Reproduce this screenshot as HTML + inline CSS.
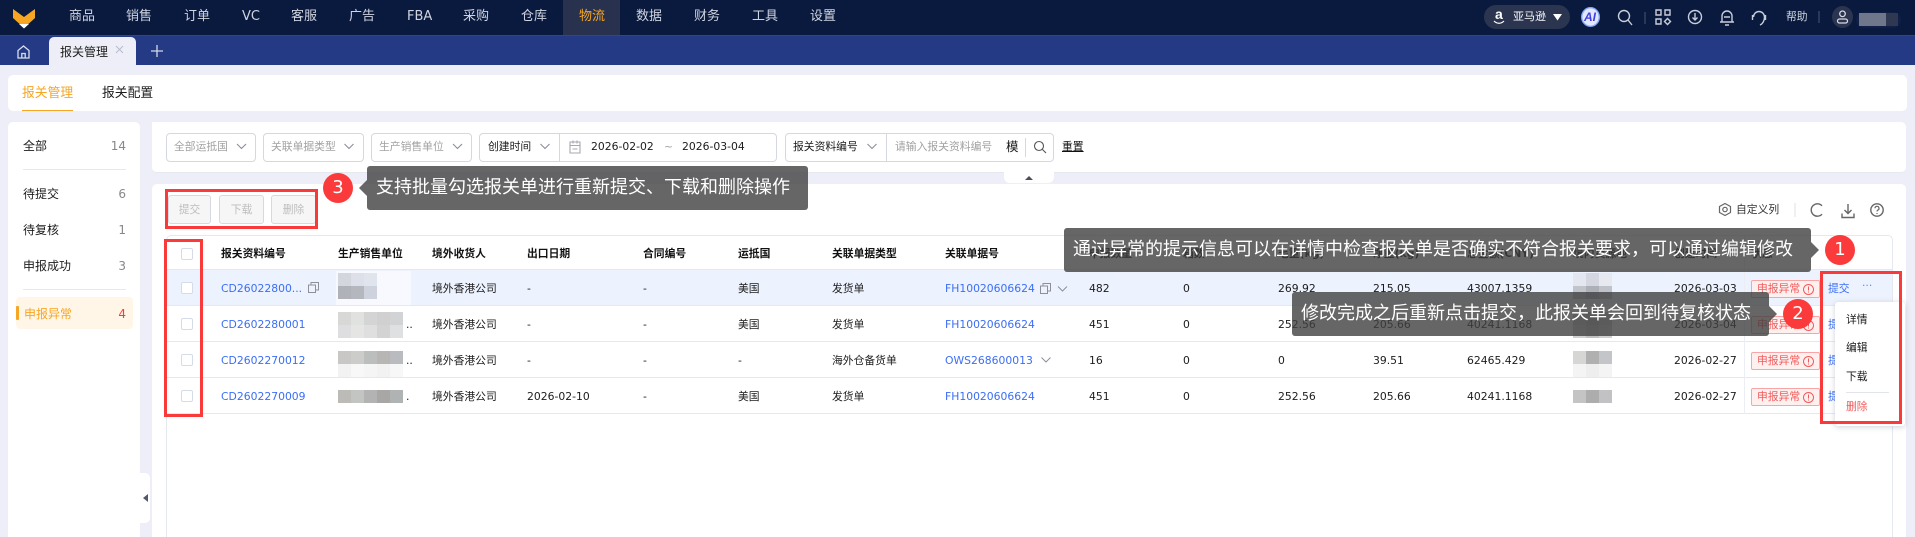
<!DOCTYPE html>
<html lang="zh"><head><meta charset="utf-8"><title>报关管理</title>
<style>
*{box-sizing:border-box}
html,body{margin:0;padding:0;width:1915px;height:537px;overflow:hidden;background:#edeef7}
body{position:relative;font:10.8px/16px "DejaVu Sans","Noto Sans CJK SC",sans-serif;color:#1c1c1c}
div,span,svg{position:absolute}
span{white-space:nowrap}
.n{top:9px;font-size:13px;color:#d0d4e0}
.card{background:#fff;border-radius:5px}
.sel{height:29px;top:133px;border:1px solid #d6d8e1;border-radius:4px;background:#fff}
.f{top:139px;color:#a2a2a2}
.d{top:139px;color:#1c1c1c}
.s{font-size:12px;line-height:16px;color:#1c1c1c}
.c{font-size:12px;line-height:16px;color:#888}
.b{top:195px;height:29px;background:#f6f6f7;border:1px solid #d6d9e1;border-radius:3px;color:#bdbdbd;text-align:center;line-height:28px}
.h{top:246px;color:#111;font-weight:bold;font-size:10.8px}
.r{left:167px;width:1725px;height:36px;border-bottom:1px solid #e6e8f0;line-height:35px}
.r span{top:1px;line-height:35px}
.r .l{color:#3b6ef6}
.cb{left:14px;top:12px;width:12px;height:12px;border:1px solid #d5dbe8;border-radius:2px;background:#fff}
.tag{left:1584px;top:10px;width:69px;height:18px;border:1px solid #f9a5a5;border-radius:2px;background:#fff0f0}
.tag span{left:5px;top:0;line-height:15px;color:#f25a5a}
.tag svg{left:50px;top:2px}
.m{width:13px;height:13px}
.tip{height:44px;background:rgba(64,64,64,.8);border-radius:3px;color:#fff;font-size:18px;line-height:44px}
.tip span{top:0;line-height:44px}
.arr{width:0;height:0;border-top:8px solid transparent;border-bottom:8px solid transparent}
.o{width:30px;height:30px;border-radius:50%;background:#fb3b3b;color:#fff;font-size:18px;line-height:30px;text-align:center}
.red{border:3px solid #f93a3a;background:transparent}
.dd{color:#1c1c1c;left:1846px}
</style></head><body>

<!-- top nav -->
<div style="left:0;top:0;width:1915px;height:35px;background:#0a1a3e"></div>
<div style="left:563px;top:0;width:57px;height:35px;background:#28324f"></div>
<svg style="left:13px;top:8px" width="22" height="21" viewBox="0 0 22 21"><path d="M0 1L11 9L22 1V10L11 20L0 10Z" fill="#f6a623"/><path d="M6 16H16L11 20.5Z" fill="#fff"/></svg>
<span class="n" style="left:69px">商品</span><span class="n" style="left:126px">销售</span><span class="n" style="left:184px">订单</span><span class="n" style="left:242px">VC</span><span class="n" style="left:291px">客服</span><span class="n" style="left:349px">广告</span><span class="n" style="left:407px">FBA</span><span class="n" style="left:463px">采购</span><span class="n" style="left:521px">仓库</span><span class="n" style="left:579px;color:#f6a623">物流</span><span class="n" style="left:636px">数据</span><span class="n" style="left:694px">财务</span><span class="n" style="left:752px">工具</span><span class="n" style="left:810px">设置</span>

<div style="left:1484px;top:5px;width:86px;height:24px;border-radius:12px;background:#2b3550"></div>
<span style="left:1495px;top:5px;color:#fff;font:bold 14px/18px 'Liberation Sans',sans-serif">a</span>
<svg style="left:1493px;top:20px" width="12" height="5" viewBox="0 0 12 5" fill="none" stroke="#fff" stroke-width="1.200"><path d="M1 1c3 3 7 3 10 0"/></svg>
<span style="left:1513px;top:9px;color:#fff;font-size:11px">亚马逊</span>
<svg style="left:1553px;top:14px" width="9" height="7" viewBox="0 0 9 7"><path d="M0 0H9L4.5 6.5Z" fill="#fff"/></svg>
<svg style="left:1581px;top:7px" width="19" height="20" viewBox="0 0 19 20"><ellipse cx="9.5" cy="10" rx="8.8" ry="9.3" fill="#e4e8ff" stroke="#86a8fa" stroke-width="1.400"/></svg>
<span style="left:1584px;top:9px;color:#3f3fe0;font:bold italic 12px/16px 'Liberation Sans',sans-serif">AI</span>
<svg style="left:1615px;top:5px" width="300" height="26" viewBox="0 0 300 26" fill="none" stroke="#c9cdd8" stroke-width="1.4">
<circle cx="9" cy="11" r="5.5"/><path d="M13 15L17 20"/>
<path d="M30 7V19" stroke="#4b5470" stroke-width="1"/>
<path d="M41 5h5v5h-5zM50 5h5v5h-5zM41 14h5v5h-5zM52.500 13.500l3 3-3 3-3-3z"/>
<circle cx="80" cy="12" r="6.500"/><path d="M80 8v7M77.500 12.500L80 15l2.500-2.500"/>
<path d="M107 17v-6a5 5 0 0 1 10 0v6zM105 17h14M110 20h4M109 12h6"/>
<path d="M138.500 12a5.500 5.500 0 0 1 11 0M149.500 12c0 4-2 7-4.500 8M137.500 10v5M150.500 10v5"/>
<path d="M204 6V18" stroke="#4b5470" stroke-width="1"/>
</svg>
<span style="left:1786px;top:9px;color:#d0d4e0;font-size:10.800px">帮助</span>
<div style="left:1832px;top:6px;width:21px;height:22px;border-radius:50%;background:#2b3550"></div>
<svg style="left:1836px;top:10px" width="13" height="14" viewBox="0 0 13 14" fill="none" stroke="#d5d9e4" stroke-width="1.3"><circle cx="6.500" cy="3.800" r="2.800"/><rect x="1.500" y="9" width="10" height="4" rx="2"/></svg>
<div style="left:1856px;top:12px;width:45px;height:16px;border-radius:8px;background:#0f1f48"></div>
<div style="left:1859px;top:13px;width:27px;height:13px;background:#70778a"></div>
<div style="left:1886px;top:13px;width:12px;height:13px;background:#2e3850"></div>

<!-- tab bar -->
<div style="left:0;top:35px;width:1915px;height:30px;background:#243a84;border-top:1px solid #2f4590"></div>
<svg style="left:17px;top:45px" width="13" height="14" viewBox="0 0 13 14" fill="none" stroke="#d9deec" stroke-width="1.300"><path d="M1 13V5.500L6.500 1L12 5.500V13ZM4.800 13V8.500H8.200V13"/></svg>
<div style="left:49px;top:37px;width:87px;height:28px;background:#edeef7;border-radius:5px 5px 0 0"></div>
<span style="left:60px;top:44px;font-size:12px;color:#1c1c1c">报关管理</span>
<svg style="left:115px;top:45px" width="9" height="9" viewBox="0 0 9 9" stroke="#b8bdcb" stroke-width="1"><path d="M1 1L8 8M8 1L1 8"/></svg>
<svg style="left:151px;top:45px" width="12" height="12" viewBox="0 0 12 12" stroke="#d3d8e6" stroke-width="1.300"><path d="M6 0V12M0 6H12"/></svg>

<!-- sub tabs -->
<div class="card" style="left:8px;top:75px;width:1899px;height:36px"></div>
<span style="left:22px;top:86px;font-size:12.800px;color:#f6a623">报关管理</span>
<div style="left:22px;top:110px;width:51px;height:1px;background:#f6a623"></div>
<span style="left:102px;top:86px;font-size:12.800px;color:#1c1c1c">报关配置</span>

<!-- sidebar -->
<div class="card" style="left:8px;top:122px;width:132px;height:430px"></div>
<span class="s" style="left:23px;top:138px">全部</span><span class="c" style="right:1789px;top:138px">14</span>
<div style="left:23px;top:169px;width:103px;height:1px;background:#e6e8ef"></div>
<span class="s" style="left:23px;top:186px">待提交</span><span class="c" style="right:1789px;top:186px">6</span>
<span class="s" style="left:23px;top:222px">待复核</span><span class="c" style="right:1789px;top:222px">1</span>
<span class="s" style="left:23px;top:258px">申报成功</span><span class="c" style="right:1789px;top:258px">3</span>
<div style="left:23px;top:289px;width:103px;height:1px;background:#e6e8ef"></div>
<div style="left:16px;top:297px;width:117px;height:32px;background:#fff6e8;border-radius:4px"></div>
<div style="left:16px;top:306px;width:3px;height:14px;background:#f6a623;border-radius:1px"></div>
<span class="s" style="left:24px;top:306px;color:#f6a623">申报异常</span><span class="c" style="right:1789px;top:306px;color:#fb3b3b">4</span>
<div style="left:140px;top:473px;width:10px;height:50px;background:#fff;border-radius:0 5px 5px 0"></div>
<svg style="left:143px;top:494px" width="5" height="8" viewBox="0 0 5 8"><path d="M5 0V8L0 4Z" fill="#55596a"/></svg>

<!-- filters -->
<div class="card" style="left:152px;top:122px;width:1754px;height:51px;border-bottom:1px solid #e6e8f0;border-radius:0 5px 5px 5px"></div>
<div class="sel" style="left:166px;width:90px"></div><span class="f" style="left:174px">全部运抵国</span>
<div class="sel" style="left:263px;width:101px"></div><span class="f" style="left:271px">关联单据类型</span>
<div class="sel" style="left:371px;width:101px"></div><span class="f" style="left:379px">生产销售单位</span>
<div class="sel" style="left:479px;width:298px"></div><span class="d" style="left:488px">创建时间</span>
<div style="left:559px;top:133px;width:1px;height:29px;background:#d6d8e1"></div>
<span class="d" style="left:591px">2026-02-02</span><span class="f" style="left:664px">~</span><span class="d" style="left:682px">2026-03-04</span>
<div class="sel" style="left:785px;width:269px"></div><span class="d" style="left:793px">报关资料编号</span>
<div style="left:886px;top:133px;width:1px;height:29px;background:#d6d8e1"></div>
<span class="f" style="left:895px">请输入报关资料编号</span><span class="d" style="left:1006px;font-size:12.500px">模</span>
<div style="left:1025px;top:138px;width:1px;height:19px;background:#d6d8e1"></div>
<span style="left:1062px;top:139px;color:#111;text-decoration:underline">重置</span>
<svg style="left:0;top:0;width:1915px;height:180px" viewBox="0 0 1915 180" fill="none" stroke="#8b8f98" stroke-width="1.100">
<path d="M237 144l4.500 4.500 4.500-4.500M344.500 144l4.500 4.500 4.500-4.500M453 144l4.500 4.500 4.500-4.500M540.500 144l4.500 4.500 4.500-4.500M867.500 144l4.500 4.500 4.500-4.500"/>
<path d="M570 142h10v11h-10zM570 145.500h10M573 140.500v3M577 140.500v3M572.500 149h5" stroke="#a5a8b0"/>
<circle cx="1039" cy="146" r="4.500" stroke="#555"/><path d="M1042.500 149.500l3.500 3.500" stroke="#555"/>
</svg>

<!-- table card -->
<div class="card" style="left:152px;top:184px;width:1754px;height:360px"></div>
<div style="left:1004px;top:172px;width:50px;height:11px;background:#fff;border-radius:0 0 6px 6px"></div>
<svg style="left:1025px;top:176px" width="8" height="4" viewBox="0 0 8 4"><path d="M0 4H8L4 0Z" fill="#4a4e5a"/></svg>

<div class="b" style="left:168px;width:43px">提交</div>
<div class="b" style="left:219px;width:45px">下载</div>
<div class="b" style="left:271px;width:45px">删除</div>

<svg style="left:1718px;top:202px" width="170" height="18" viewBox="0 0 170 18" fill="none" stroke="#666" stroke-width="1.200">
<path d="M7 1.500l5.500 3v6l-5.500 3-5.500-3v-6z" stroke-linejoin="round"/><circle cx="7" cy="7.500" r="2.200"/>
<path d="M77 1V15" stroke="#e4e6ec"/>
<path d="M104 3.800a6.200 6.200 0 1 0 0 8.400" stroke-width="1.400"/>
<path d="M130 2v9M126.500 8l3.500 3.500L133.500 8M124 11.500v4h12v-4" stroke-width="1.400"/>
<circle cx="159" cy="8" r="6.200" stroke-width="1.400"/><path d="M157 6.300a2 2 0 1 1 2.700 1.900c-.6.300-.7.700-.7 1.300M159 11v1" stroke-width="1.200"/>
</svg>
<span style="left:1736px;top:202px;color:#333">自定义列</span>

<!-- table frame -->
<div style="left:166px;top:235px;width:1727px;height:310px;border:1px solid #e6e8f0;border-radius:5px 5px 0 0"></div>
<div style="left:167px;top:269px;width:1725px;height:1px;background:#e6e8f0"></div>

<div class="cb" style="left:181px;top:248px"></div>
<span class="h" style="left:221px">报关资料编号</span><span class="h" style="left:338px">生产销售单位</span><span class="h" style="left:432px">境外收货人</span><span class="h" style="left:527px">出口日期</span><span class="h" style="left:643px">合同编号</span><span class="h" style="left:738px">运抵国</span><span class="h" style="left:832px">关联单据类型</span><span class="h" style="left:945px">关联单据号</span><span class="h" style="left:1089px">申报数量</span><span class="h" style="left:1183px">箱数</span><span class="h" style="left:1278px">毛重(kg)</span><span class="h" style="left:1373px">净重(kg)</span><span class="h" style="left:1467px">总金额(CNY)</span><span class="h" style="left:1573px">境内货源地</span><span class="h" style="left:1674px">创建时间</span><span class="h" style="left:1751px">状态</span>

<!-- rows; child left = page x - 167 -->
<div class="r" style="top:270px;background:#edf3fe"><div class="cb"></div>
<span class="l" style="left:54px">CD26022800...</span>
<svg style="left:141px;top:12px" width="11" height="11" viewBox="0 0 11 11" fill="none" stroke="#8d9099"><path d="M.5 3h7v7.500h-7zM3 3V.5h7.500V8H8"/></svg>
<span style="left:265px">境外香港公司</span><span style="left:360px">-</span><span style="left:476px">-</span><span style="left:571px">美国</span><span style="left:665px">发货单</span>
<span class="l" style="left:778px">FH10020606624</span>
<svg style="left:873px;top:13px" width="28" height="11" viewBox="0 0 28 11" fill="none" stroke="#8d9099"><path d="M.5 3h7v7.500h-7zM3 3V.5h7.500V8H8M18 3.500l4.500 4.500 4.500-4.500"/></svg>
<span style="left:922px">482</span><span style="left:1016px">0</span><span style="left:1111px">269.92</span><span style="left:1206px">215.05</span><span style="left:1300px">43007.1359</span><span style="left:1507px">2026-03-03</span>
<div class="tag"><span>申报异常</span><svg width="13" height="13" viewBox="0 0 13 13" fill="none" stroke="#f25a5a"><circle cx="6.500" cy="6.500" r="5"/><path d="M6.500 3.500v4M6.500 8.500v1"/></svg></div>
<span class="l" style="left:1661px">提交</span><span class="l" style="left:1695px;top:-2px;opacity:.8">···</span></div>

<div class="r" style="top:306px"><div class="cb"></div>
<span class="l" style="left:54px">CD2602280001</span><span style="left:239px">..</span>
<span style="left:265px">境外香港公司</span><span style="left:360px">-</span><span style="left:476px">-</span><span style="left:571px">美国</span><span style="left:665px">发货单</span>
<span class="l" style="left:778px">FH10020606624</span>
<span style="left:922px">451</span><span style="left:1016px">0</span><span style="left:1111px">252.56</span><span style="left:1206px">205.66</span><span style="left:1300px">40241.1168</span><span style="left:1507px">2026-03-04</span>
<div class="tag"><span>申报异常</span><svg width="13" height="13" viewBox="0 0 13 13" fill="none" stroke="#f25a5a"><circle cx="6.500" cy="6.500" r="5"/><path d="M6.500 3.500v4M6.500 8.500v1"/></svg></div>
<span class="l" style="left:1661px">提交</span></div>

<div class="r" style="top:342px"><div class="cb"></div>
<span class="l" style="left:54px">CD2602270012</span><span style="left:239px">..</span>
<span style="left:265px">境外香港公司</span><span style="left:360px">-</span><span style="left:476px">-</span><span style="left:571px">-</span><span style="left:665px">海外仓备货单</span>
<span class="l" style="left:778px">OWS268600013</span>
<svg style="left:874px;top:14px" width="10" height="8" viewBox="0 0 10 8" fill="none" stroke="#8d9099"><path d="M.5 1.500L5 6l4.500-4.500"/></svg>
<span style="left:922px">16</span><span style="left:1016px">0</span><span style="left:1111px">0</span><span style="left:1206px">39.51</span><span style="left:1300px">62465.429</span><span style="left:1507px">2026-02-27</span>
<div class="tag"><span>申报异常</span><svg width="13" height="13" viewBox="0 0 13 13" fill="none" stroke="#f25a5a"><circle cx="6.500" cy="6.500" r="5"/><path d="M6.500 3.500v4M6.500 8.500v1"/></svg></div>
<span class="l" style="left:1661px">提交</span></div>

<div class="r" style="top:378px"><div class="cb"></div>
<span class="l" style="left:54px">CD2602270009</span><span style="left:239px">.</span>
<span style="left:265px">境外香港公司</span><span style="left:360px">2026-02-10</span><span style="left:476px">-</span><span style="left:571px">美国</span><span style="left:665px">发货单</span>
<span class="l" style="left:778px">FH10020606624</span>
<span style="left:922px">451</span><span style="left:1016px">0</span><span style="left:1111px">252.56</span><span style="left:1206px">205.66</span><span style="left:1300px">40241.1168</span><span style="left:1507px">2026-02-27</span>
<div class="tag"><span>申报异常</span><svg width="13" height="13" viewBox="0 0 13 13" fill="none" stroke="#f25a5a"><circle cx="6.500" cy="6.500" r="5"/><path d="M6.500 3.500v4M6.500 8.500v1"/></svg></div>
<span class="l" style="left:1661px">提交</span></div>

<div style="left:1744px;top:236px;width:1px;height:178px;background:#eceef3"></div>

<!-- mosaics -->
<div style="left:336px;top:271px;width:75px;height:34px;background:#f7f9fe"></div>
<div class="m" style="left:338px;top:273px;background:#d4d6dd"></div><div class="m" style="left:351px;top:273px;background:#dde0e8"></div><div class="m" style="left:364px;top:273px;background:#e0e4ec"></div>
<div class="m" style="left:338px;top:286px;background:#b0b2ba"></div><div class="m" style="left:351px;top:286px;background:#b5b7bf"></div><div class="m" style="left:364px;top:286px;background:#cdd2dd"></div>
<div class="m" style="left:338px;top:312px;background:#d8d8d6"></div><div class="m" style="left:351px;top:312px;background:#e0e2e0"></div><div class="m" style="left:364px;top:312px;background:#d4d4d4"></div><div class="m" style="left:377px;top:312px;background:#d0d0d0"></div><div class="m" style="left:390px;top:312px;background:#d2d3d5"></div>
<div class="m" style="left:338px;top:325px;background:#dedee0"></div><div class="m" style="left:351px;top:325px;background:#e5e5e3"></div><div class="m" style="left:364px;top:325px;background:#dfdfdf"></div><div class="m" style="left:377px;top:325px;background:#d3d3d3"></div><div class="m" style="left:390px;top:325px;background:#dfe0e2"></div>
<div class="m" style="left:338px;top:351px;background:#c8c7c5"></div><div class="m" style="left:351px;top:351px;background:#cccdcb"></div><div class="m" style="left:364px;top:351px;background:#bcbdbd"></div><div class="m" style="left:377px;top:351px;background:#b8b6b4"></div><div class="m" style="left:390px;top:351px;background:#babbbf"></div>
<div class="m" style="left:338px;top:364px;background:#f2f2f2"></div><div class="m" style="left:351px;top:364px;background:#f8f8f8"></div><div class="m" style="left:364px;top:364px;background:#f5f5f5"></div><div class="m" style="left:377px;top:364px;background:#f2f2f2"></div><div class="m" style="left:390px;top:364px;background:#f7f7f7"></div>
<div class="m" style="left:338px;top:390px;background:#bcbbb8"></div><div class="m" style="left:351px;top:390px;background:#c3c5c3"></div><div class="m" style="left:364px;top:390px;background:#b2b3b2"></div><div class="m" style="left:377px;top:390px;background:#a8a7a5"></div><div class="m" style="left:390px;top:390px;background:#b0b3b4"></div>

<div class="m" style="left:1573px;top:273px;background:#e4e7ef"></div><div class="m" style="left:1586px;top:273px;background:#d4d7df"></div><div class="m" style="left:1599px;top:273px;background:#e6e9f0"></div>
<div class="m" style="left:1573px;top:286px;background:#c2c4cb"></div><div class="m" style="left:1586px;top:286px;background:#aeb0b8"></div><div class="m" style="left:1599px;top:286px;background:#c0c2ca"></div>
<div class="m" style="left:1573px;top:312px;background:#c8c8c8"></div><div class="m" style="left:1586px;top:312px;background:#b8b8b8"></div><div class="m" style="left:1599px;top:312px;background:#c8c8c8"></div>
<div class="m" style="left:1573px;top:325px;background:#d0d0d0"></div><div class="m" style="left:1586px;top:325px;background:#c0c0c0"></div><div class="m" style="left:1599px;top:325px;background:#d0d0d0"></div>
<div class="m" style="left:1573px;top:351px;background:#d6d6d4"></div><div class="m" style="left:1586px;top:351px;background:#b0b0b0"></div><div class="m" style="left:1599px;top:351px;background:#c4c5c9"></div>
<div class="m" style="left:1573px;top:364px;background:#f4f4f4"></div><div class="m" style="left:1586px;top:364px;background:#eeeeee"></div><div class="m" style="left:1599px;top:364px;background:#f4f4f4"></div>
<div class="m" style="left:1573px;top:390px;background:#c4c4c4"></div><div class="m" style="left:1586px;top:390px;background:#adadad"></div><div class="m" style="left:1599px;top:390px;background:#c2c2c4"></div>

<!-- dropdown -->
<div style="left:1835px;top:302px;width:70px;height:124px;background:#fff;border-radius:3px;box-shadow:0 1px 6px rgba(60,70,100,.25)"></div>
<span class="dd" style="top:312px">详情</span><span class="dd" style="top:340px">编辑</span><span class="dd" style="top:369px">下载</span>
<div style="left:1846px;top:392px;width:43px;height:1px;background:#e2e4ec"></div>
<span class="dd" style="top:399px;color:#f25a5a">删除</span>

<!-- red highlight boxes -->
<div class="red" style="left:165px;top:189px;width:153px;height:40px"></div>
<div class="red" style="left:164px;top:239px;width:39px;height:178px"></div>
<div class="red" style="left:1820px;top:271px;width:82px;height:153px"></div>

<!-- tooltips -->
<div class="o" style="left:323px;top:173px">3</div>
<div class="arr" style="left:359px;top:180px;border-right:8px solid rgba(64,64,64,.8)"></div>
<div class="tip" style="left:367px;top:166px;width:441px"><span style="left:9px">支持批量勾选报关单进行重新提交、下载和删除操作</span></div>

<div class="tip" style="left:1064px;top:228px;width:747px"><span style="left:9px">通过异常的提示信息可以在详情中检查报关单是否确实不符合报关要求，可以通过编辑修改</span></div>
<div class="arr" style="left:1811px;top:242px;border-left:8px solid rgba(64,64,64,.8)"></div>
<div class="o" style="left:1825px;top:235px">1</div>

<div class="tip" style="left:1292px;top:292px;width:477px"><span style="left:9px">修改完成之后重新点击提交，此报关单会回到待复核状态</span></div>
<div class="arr" style="left:1769px;top:306px;border-left:8px solid rgba(64,64,64,.8)"></div>
<div class="o" style="left:1783px;top:299px">2</div>

</body></html>
